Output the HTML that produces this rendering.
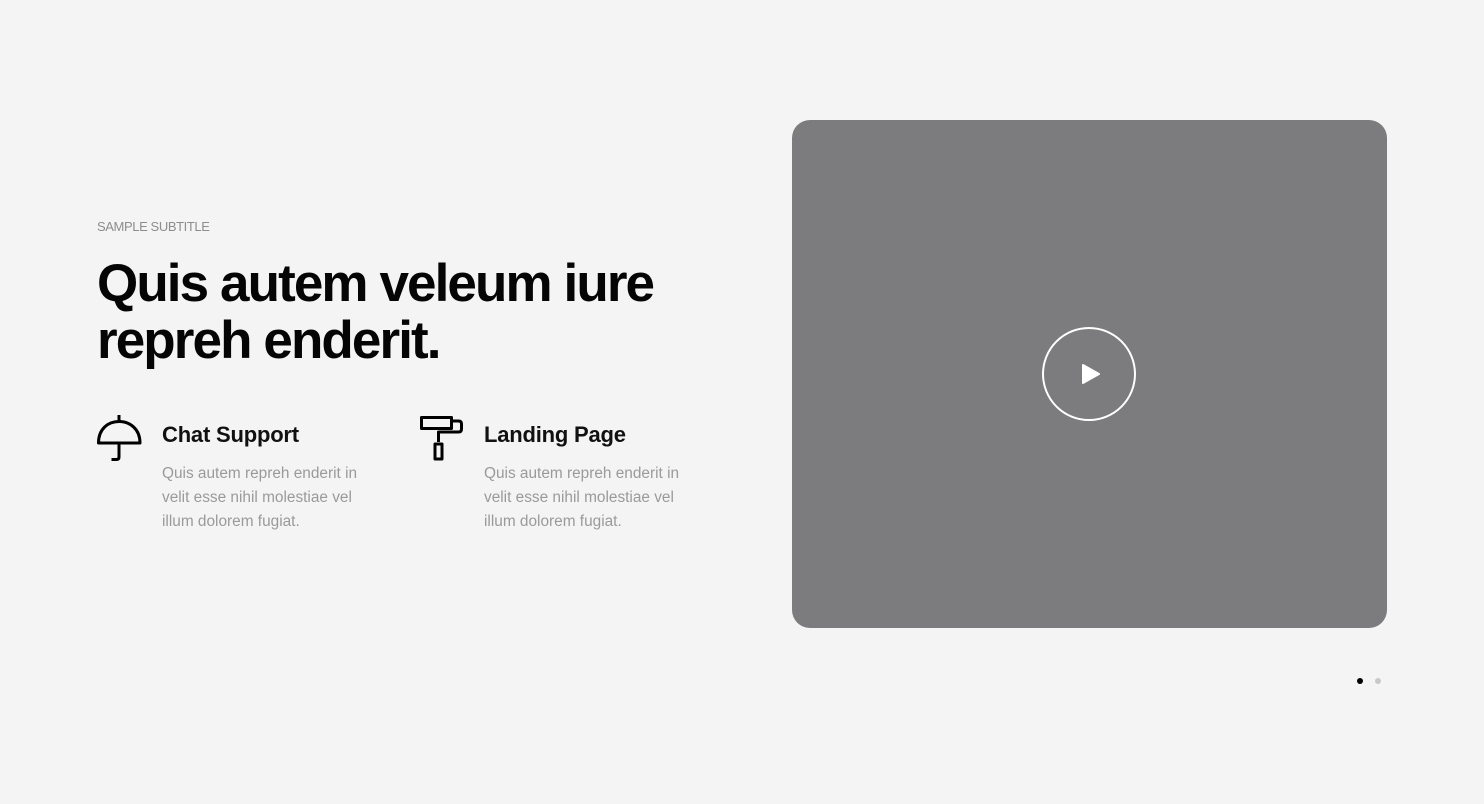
<!DOCTYPE html>
<html><head><style>
body{margin:0;width:1484px;height:804px;background:#f4f4f4;font-family:"Liberation Sans",sans-serif;position:relative;overflow:hidden}
.sub{position:absolute;left:97px;top:219px;font-size:13px;color:#8d8d8d;letter-spacing:-0.4px}
h1{position:absolute;left:97px;top:255px;margin:0;font-size:53px;line-height:57px;font-weight:bold;color:#050505;letter-spacing:-1.9px}
.f{position:absolute;top:422px}
.f h3{margin:0;font-size:22px;font-weight:bold;color:#111;letter-spacing:-0.2px}
.f p{margin:14px 0 0;font-size:15.4px;line-height:24px;color:#9a9a9a;width:215px}
.video{position:absolute;left:792px;top:120px;width:595px;height:508px;background:#7c7c7e;border-radius:18px}
.play{position:absolute;left:250px;top:207px;width:90px;height:90px;border:2px solid #fff;border-radius:50%}
.dot{position:absolute;top:678px;width:6px;height:6px;border-radius:50%}
</style></head><body>
<div class="sub">SAMPLE SUBTITLE</div>
<h1>Quis autem veleum iure<br>repreh enderit.</h1>
<svg style="position:absolute;left:95px;top:413px" width="50" height="50" viewBox="0 0 50 50" fill="none" stroke="#000" stroke-width="3">
<path d="M3.5 30 C3.5 16 13 8.5 24 8.5 C35 8.5 45 16 45 30 Z" stroke-linejoin="round"/><path d="M24 2v6M24 30v14q0 2.5-2.5 2.5h-5"/></svg>
<svg style="position:absolute;left:418px;top:413px" width="50" height="50" viewBox="0 0 50 50" fill="none" stroke="#000" stroke-width="3" stroke-linejoin="round">
<rect x="3.5" y="4.5" width="30" height="11"/><path d="M33.5 8h7q3 0 3 3v5q0 3-3 3h-20v10"/><rect x="17" y="31" width="7" height="15"/></svg>
<div class="f" style="left:162px"><h3>Chat Support</h3><p>Quis autem repreh enderit in velit esse nihil molestiae vel illum dolorem fugiat.</p></div>
<div class="f" style="left:484px"><h3>Landing Page</h3><p>Quis autem repreh enderit in velit esse nihil molestiae vel illum dolorem fugiat.</p></div>
<div class="video"><div class="play"><svg style="position:absolute;left:37px;top:34px" width="20" height="22" viewBox="0 0 20 22"><path d="M2 2 L18 11 L2 20Z" fill="#fff" stroke="#fff" stroke-width="2" stroke-linejoin="round"/></svg></div></div>
<div class="dot" style="left:1357px;background:#000"></div>
<div class="dot" style="left:1375px;background:#c8c8c8"></div>
</body></html>
